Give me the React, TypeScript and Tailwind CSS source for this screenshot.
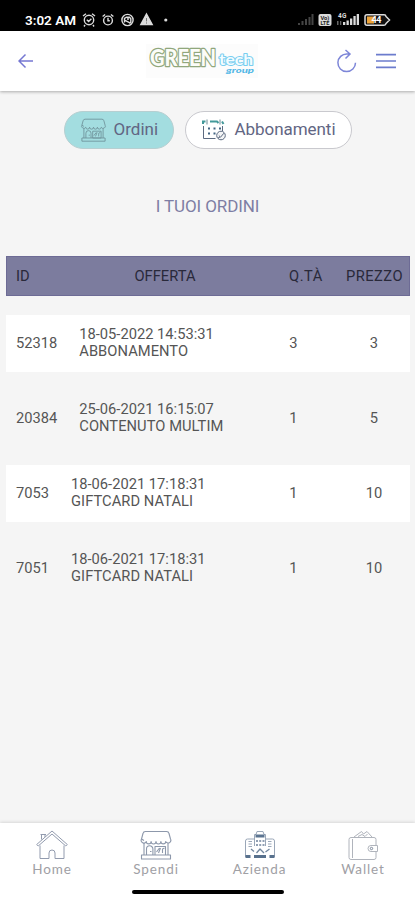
import type { ReactNode } from "react";

type Order = { id: string; date: string; offer: string; qty: number; price: number };

const orders: Order[] = [
  { id: "52318", date: "18-05-2022 14:53:31", offer: "ABBONAMENTO", qty: 3, price: 3 },
  { id: "20384", date: "25-06-2021 16:15:07", offer: "CONTENUTO MULTIM", qty: 1, price: 5 },
  { id: "7053", date: "18-06-2021 17:18:31", offer: "GIFTCARD NATALI", qty: 1, price: 10 },
  { id: "7051", date: "18-06-2021 17:18:31", offer: "GIFTCARD NATALI", qty: 1, price: 10 },
];

const navItems: { label: string; icon: ReactNode; width: string }[] = [
  { label: "Home", icon: <HomeIcon />, width: "w-[104px]" },
  { label: "Spendi", icon: <ShopIcon className="w-8 h-[30px] text-[#8d98ab]" />, width: "w-[104px]" },
  { label: "Azienda", icon: <CompanyIcon />, width: "w-[103px]" },
  { label: "Wallet", icon: <WalletIcon />, width: "w-[104px]" },
];

export default function App() {
  return (
    <div className="w-[415px] h-[900px] flex flex-col overflow-hidden bg-[#f5f5f5] font-[Roboto,sans-serif]">
      <StatusBar />
      <TopBar />
      <main className="flex-1 min-h-0">
        {/* tabs */}
        <div className="flex justify-center gap-[11px] pt-[20px]">
          <button className="w-[110px] h-[38px] rounded-full border border-[#b6cfd1] bg-[#a3dde0] flex items-center pl-[15px] gap-[7px]">
            <ShopIcon className="w-[27px] h-6 text-[#6f939b]" />
            <span className="text-[17px] text-[#626683]">Ordini</span>
          </button>
          <button className="w-[167px] h-[38px] rounded-full border border-[#c9c9ce] bg-white flex items-center pl-[16px] gap-[9px]">
            <CalendarIcon />
            <span className="text-[17px] tracking-[-0.05px] text-[#626683]">Abbonamenti</span>
          </button>
        </div>
        <h1 className="mt-[45px] h-6 text-center leading-6 text-[17px] tracking-[-0.1px] text-[#7e7ea4]">I TUOI ORDINI</h1>
        <OrdersTable />
      </main>
      <BottomNav />
    </div>
  );
}

function StatusBar() {
  return (
    <div className="h-[31px] shrink-0 bg-black flex items-center pt-[8px] pl-[25px] pr-[24px] text-[#dcdcdc]">
      <span className="w-[52px] text-[13.5px] font-semibold leading-4 text-white whitespace-nowrap">3:02 AM</span>
      <svg className="ml-[3px] w-[92px] h-4" viewBox="0 0 92 16" fill="none" stroke="currentColor" strokeWidth="1.4">
        <circle cx="9" cy="8" r="4.7" />
        <path d="M3 4l3-2.3M15 4l-3-2.3M5 13l-1 1.5M13 13l1 1.5M6.8 7.8l1.8 1.7 2.8-2.8" />
        <circle cx="28" cy="8.5" r="4.4" />
        <path d="M22.6 4.5l2.5-2M33.4 4.5l-2.5-2M28 5.8v3h1.8" />
        <circle cx="47.5" cy="8" r="5.6" />
        <path d="M44.5 10.6V6.4l2-1.2h3l1.3 1.6v3.8l-1.5.8M45 8.3l5 2.5M47 7h2" />
        <path d="M66.5 2l5.7 10.6H60.8z" fill="currentColor" />
        <path d="M66.5 6v3.4M66.5 10.4v1.2" stroke="#777" strokeWidth="1" />
        <circle cx="85.8" cy="8" r="1.6" fill="currentColor" stroke="none" />
      </svg>
      <div className="flex-1" />
      <svg className="w-[93px] h-4" viewBox="0 0 93 16" fill="currentColor">
        <path d="M0 13h2v-2h-2zM3.5 13h2V9h-2zM7 13h2V7H7zM10.5 13h2V5h-2zM13.5 13h2V2h-2z" fill="#444" />
        <rect x="20.5" y="2" width="13" height="12" rx="2" />
        <text x="22.4" y="7.5" fontSize="5.5" fontWeight="700" fill="#222" textLength="9" lengthAdjust="spacingAndGlyphs">Vo)</text>
        <text x="22.4" y="12.7" fontSize="5.5" fontWeight="700" fill="#222" textLength="9" lengthAdjust="spacingAndGlyphs">LTE</text>
        <text x="40" y="6.3" fontSize="6.5" fontWeight="700" textLength="8.5">4G</text>
        <path d="M39 13V9h1.5v4zM42 13V9h1.3v4z" fill="#666" />
        <path d="M45 13h2.3v-3H45zM48.5 13h2.3V8.5h-2.3zM52 13h2.3V6.5H52zM55.4 13h2.3V4h-2.3zM58.7 13H61V2h-2.3z" />
        <path d="M69 2.7h17a2 2 0 0 1 2 1.8l3.5 3.5-3.5 3.5a2 2 0 0 1-2 1.8H69a2 2 0 0 1-2-2V4.7a2 2 0 0 1 2-2z" fill="#111" stroke="currentColor" strokeWidth="1.5" />
        <path d="M69 4.5h7v7h-7z" fill="#eda43a" />
        <text x="73.5" y="11.3" fontSize="9" fontWeight="700" fill="#fff" textLength="10">44</text>
      </svg>
    </div>
  );
}

function TopBar() {
  return (
    <header className="h-[60px] shrink-0 bg-white flex items-center shadow-[0_1px_3px_rgba(0,0,0,0.3)]">
      <svg className="ml-[18px] w-4 h-4" viewBox="0 0 16 16" fill="none" stroke="#7577d2" strokeWidth="1.5">
        <path d="M15 8H1.5M7.5 1.5L1 8l6.5 6.5" />
      </svg>
      <Logo />
      <svg className="ml-[78px] w-[22px] h-6" viewBox="0 0 22 24" fill="none" stroke="#7d86d8" strokeWidth="1.5">
        <path d="M11 5A8.8 8.8 0 1 0 19.5 13.8" />
        <path d="M9.5 1l4.5 4-4.5 4.5M14 5h-3" />
      </svg>
      <svg className="ml-[18px] w-5 h-4" viewBox="0 0 20 16" stroke="#6c7ccd" strokeWidth="1.7">
        <path d="M0 1.7h20M0 8h20M0 14.3h20" />
      </svg>
    </header>
  );
}

function Logo() {
  return (
    <svg className="ml-[112px] w-[112px] h-[34px]" viewBox="0 0 112 34" fontFamily="Lato, sans-serif" strokeLinejoin="round">
      <rect width="112" height="34" fill="#fcfcfc" />
      <text x="4" y="21.5" fontSize="22.5" fontWeight="900" fill="#fbfcf8" stroke="#90a77c" strokeWidth="2.6" paintOrder="stroke" textLength="66" lengthAdjust="spacingAndGlyphs">GREEN</text>
      <text x="73" y="21" fontSize="14.5" fontWeight="700" fill="#f4fcff" stroke="#79cef0" strokeWidth="1.9" paintOrder="stroke" textLength="34" lengthAdjust="spacingAndGlyphs">tech</text>
      <text x="80" y="29" fontSize="7" fontWeight="900" fontStyle="italic" fill="#55b8e6" textLength="28" lengthAdjust="spacingAndGlyphs">group</text>
    </svg>
  );
}

function OrdersTable() {
  return (
    <section className="mt-[38px] pl-[6px] pr-[5px] text-[14.7px] text-[#555]">
      <div className="h-10 pl-[9px] flex items-center bg-[#7c7c9e] border border-[#6d6b95] text-[#29293a]">
        <span className="w-[54px]">ID</span>
        <span className="w-[190px] text-center">OFFERTA</span>
        <span className="w-[92px] text-center tracking-[0.5px]">Q.TÀ</span>
        <span className="w-[45px] flex justify-center whitespace-nowrap tracking-[0.5px]">PREZZO</span>
      </div>
      <div className="pt-[19px] flex flex-col gap-[18px]">
        {orders.map((o) => (
          <div key={o.id} className="h-[57px] pl-[10px] pb-px flex items-center odd:bg-white">
            <div className="w-[251px] shrink-0 flex items-center">
              <span>{o.id}</span>
              <div className="ml-[22px] leading-[17.5px]">
                <p>{o.date}</p>
                <p className="tracking-[0.05px]">{o.offer}</p>
              </div>
            </div>
            <span className="w-[53px] shrink-0 text-center">{o.qty}</span>
            <span className="flex-1 pl-[18px] text-center">{o.price}</span>
          </div>
        ))}
      </div>
    </section>
  );
}

function BottomNav() {
  return (
    <nav className="h-[77px] shrink-0 bg-white flex flex-col items-center shadow-[0_-1px_3px_rgba(0,0,0,0.12)]">
      <div className="w-full h-[67px] flex">
        {navItems.map((n) => (
          <a key={n.label} className={`${n.width} flex flex-col items-center pt-[7px]`}>
            {n.icon}
            <span className="mt-px text-[13.5px] leading-4 tracking-[0.9px] text-[#a0a0a5] font-[Lato,sans-serif]">{n.label}</span>
          </a>
        ))}
      </div>
      <div className="w-[152px] h-[4px] rounded-full bg-black" />
    </nav>
  );
}

function HomeIcon() {
  return (
    <svg className="w-8 h-[30px]" viewBox="0 0 32 30" fill="none" stroke="#929bae" strokeWidth="1" strokeLinejoin="round">
      <path d="M.7 14.5L16 1l15.3 13.5-1.5 1.5L16 4 2.2 16z" />
      <path d="M5.5 9.5V4.500h3.500V7M4.500 4.500h5.500M4 15.500v13h9V23a3 3 0 0 1 6 0v5.500h9v-13" />
    </svg>
  );
}

function ShopIcon({ className }: { className: string }) {
  return (
    <svg className={className} viewBox="0 0 32 30" fill="none" stroke="currentColor" strokeWidth="1.1" strokeLinejoin="round">
      <path d="M4 10.5L1.5 9 3 3.500a2.500 2.500 0 0 1 2.500-2h21a2.500 2.500 0 0 1 2.500 2L30.500 9" />
      <path d="M1.5 9a2.400 2.400 0 0 0 4.800 2.500 2.400 2.400 0 0 0 4.800 0 2.400 2.400 0 0 0 4.900 0 2.400 2.400 0 0 0 4.900 0 2.400 2.400 0 0 0 4.800 0 2.400 2.400 0 0 0 4.800-2.500" />
      <path d="M4 13v12M28 13v12M1.500 25h29v4h-29zM6.500 25v-6a3.200 3.200 0 0 1 6.400 0v6M15 16.500h10.500V25H15z" />
      <path d="M10 21.500h1.500M16.500 22l3-4M20.500 18l-2 5M22.500 23v-4l2-1" />
    </svg>
  );
}

function CalendarIcon() {
  return (
    <svg className="w-6 h-6" viewBox="0 0 24 24" fill="none" stroke="#5c6a80" strokeWidth="1">
      <path d="M1.5 8v12.500h12M20.500 8v5" />
      <path d="M1 6V3.500h2.500M8 3.500h7l1.500 1.500M20 3.500l1.500 2.500" stroke="#43999a" strokeWidth="2" />
      <path d="M5 1.500v5M18 1.500v5" stroke="#6b8a94" />
      <path d="M6 10.500h2M11.500 10.500h2M17 10.500h2M6 15.500h2M11.500 15.500h2" stroke="#426482" strokeWidth="2" />
      <circle cx="19" cy="17.5" r="4.3" fill="#f4f5f6" />
      <path d="M16.800 17.500l1.700 1.700 3.400-4M16 20l2-1" />
    </svg>
  );
}

function CompanyIcon() {
  return (
    <svg className="w-8 h-[30px]" viewBox="0 0 32 30" fill="none" stroke="#9aa7b8" strokeWidth="1" strokeLinejoin="round">
      <path d="M10.500 16V4.500h1.500l1-3h6l1 3h1.500V16M10.500 9h-7a2 2 0 0 0-2 2v16M21.500 9h7a2 2 0 0 1 2 2v16" />
      <path d="M11.500 6h9" stroke="#5b7491" strokeWidth="3" />
      <path d="M12 11h2M15.200 11h2M18.500 11h2M12 15h2M15.200 15h2M18.500 15h2" stroke="#6d819b" strokeWidth="1.7" />
      <path d="M4.500 11.500h3.500M4.500 14h3.500M4.500 16.500h3.500M24 11.500h3.500M24 14h3.500M24 16.500h3.500" />
      <path d="M7 19l3 2.500M25.500 19l-4 3M12.500 23l3.500-4 4 4" stroke="#71869e" strokeWidth="1.3" />
      <path d="M1.500 26.500h5M10 26.500h12M25.500 26.500h5" stroke="#58718d" strokeWidth="3" />
    </svg>
  );
}

function WalletIcon() {
  return (
    <svg className="w-8 h-[30px]" viewBox="0 0 32 30" fill="none" stroke="#b0b4bc" strokeWidth="1" strokeLinejoin="round">
      <path d="M4 7.500h23a2 2 0 0 1 2 2v18a2 2 0 0 1-2 2H4a2 2 0 0 1-2-2v-18a2 2 0 0 1 2-2zM5.500 9v19" />
      <path d="M7 7l7.500-5.500 2 2.500 3.500-2.500 5 5.500M11 6.500l4-2 3 2 2.500-2.500" />
      <path d="M30.500 15.500H24a3 3 0 0 0 0 6h6.500z" fill="#fff" />
      <circle cx="24.500" cy="18.500" r="1.200" stroke="#7b8799" />
    </svg>
  );
}
